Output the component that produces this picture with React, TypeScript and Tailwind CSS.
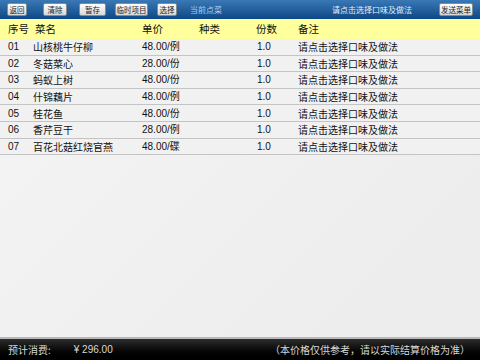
import React from "react";

const rows = [
  { no: "01", name: "山核桃牛仔柳", price: "48.00/例" },
  { no: "02", name: "冬菇菜心", price: "28.00/份" },
  { no: "03", name: "蚂蚁上树", price: "48.00/份" },
  { no: "04", name: "什锦藕片", price: "48.00/例" },
  { no: "05", name: "桂花鱼", price: "48.00/份" },
  { no: "06", name: "香芹豆干", price: "28.00/例" },
  { no: "07", name: "百花北菇红烧官燕", price: "48.00/碟" },
];

const font = { fontFamily: '"Noto Sans CJK SC", "Liberation Sans", sans-serif' };

const Btn = ({ label, w }: { label: string; w: string }) => (
  <div
    className={`${w} h-[13px] flex items-center justify-center rounded-[2px] border border-[#8a8a8a] bg-gradient-to-b from-white to-[#d8d8d8] text-[7.5px] leading-none text-[#222]`}
  >
    {label}
  </div>
);

const App = () => {
  return (
    <div className="w-[480px] h-[360px] flex flex-col bg-[#efefef] overflow-hidden" style={font}>
      {/* top bar */}
      <div className="h-[19px] flex items-center bg-gradient-to-b from-[#3a78b6] to-[#0c4786] pl-[7px] pr-[7px]">
        <Btn label="返回" w="w-[20px]" />
        <div className="w-[16px]" />
        <Btn label="清除" w="w-[24px]" />
        <div className="w-[12px]" />
        <Btn label="暂存" w="w-[27px]" />
        <div className="w-[9px]" />
        <Btn label="临时项目" w="w-[33px]" />
        <div className="w-[9px]" />
        <Btn label="选择" w="w-[20px]" />
        <span className="ml-[13px] text-[8px] text-[#a8d0f2]">当前点菜</span>
        <span className="ml-[110px] text-[8px] text-[#e4eef8]">请点击选择口味及做法</span>
        <div className="flex-1" />
        <Btn label="发送菜单" w="w-[34px]" />
      </div>

      {/* header row */}
      <div className="h-[20px] flex items-center bg-[#ffff9c] text-[10.5px] text-[#111]">
        <span className="w-[35px] pl-[8px]">序号</span>
        <span className="w-[107px]">菜名</span>
        <span className="w-[57px]">单价</span>
        <span className="w-[57px]">种类</span>
        <span className="w-[42px]">份数</span>
        <span>备注</span>
      </div>

      {/* list */}
      <div className="flex-1 flex flex-col bg-[linear-gradient(135deg,#f4f4f4,#ececec)]">
        {rows.map((r) => (
          <div
            key={r.no}
            className="h-[16.6px] flex items-center border-b border-[#c4c4c4] text-[10px] text-[#111] bg-[#f1f1f1]"
          >
            <span className="w-[33px] pl-[8px]" style={{ fontFamily: '"Liberation Sans", sans-serif' }}>
              {r.no}
            </span>
            <span className="w-[109px]">{r.name}</span>
            <span className="w-[115px]" style={{ fontFamily: '"Liberation Sans", "Noto Sans CJK SC", sans-serif' }}>
              {r.price}
            </span>
            <span className="w-[41px]" style={{ fontFamily: '"Liberation Sans", sans-serif' }}>
              1.0
            </span>
            <span>请点击选择口味及做法</span>
          </div>
        ))}
      </div>

      {/* bottom bar */}
      <div className="h-[2px] bg-[#b8b8b8]" />
      <div className="h-[21px] flex items-center bg-gradient-to-b from-[#2e2e2e] to-[#000] text-[10px] text-[#d8d8d8] pl-[8px] pr-[10px]">
        <span>预计消费:</span>
        <span className="ml-[23px]" style={{ fontFamily: '"Liberation Sans", sans-serif' }}>
          ¥ 296.00
        </span>
        <div className="flex-1" />
        <span>（本价格仅供参考，请以实际结算价格为准）</span>
      </div>
    </div>
  );
};

export default App;
